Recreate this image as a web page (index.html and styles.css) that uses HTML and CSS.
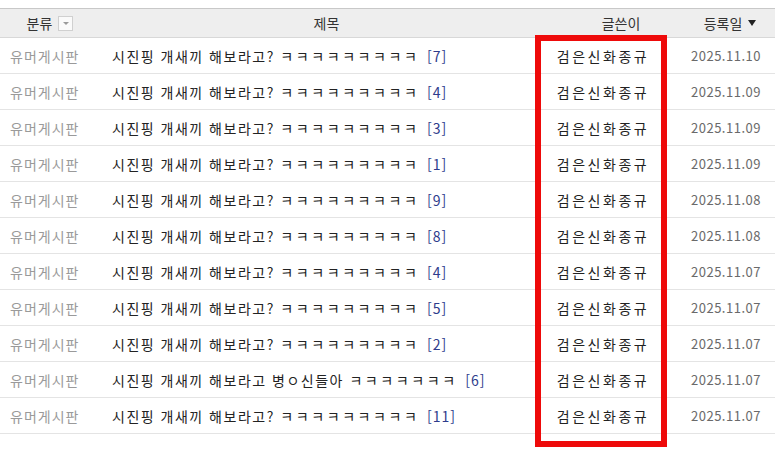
FILE: index.html
```html
<!DOCTYPE html>
<html lang="ko">
<head>
<meta charset="utf-8">
<title>게시판</title>
<link rel="stylesheet" href="styles.css">
</head>
<body>
<div class="page">
  <div class="topline"></div>
  <div class="board">
    <div class="row head">
      <div class="c-cat">분류 <span class="ddbox"><span class="ddtri"></span></span></div>
      <div class="c-title-h">제목</div>
      <div class="c-author-h">글쓴이</div>
      <div class="c-date-h">등록일 <span class="sorttri"></span></div>
    </div>
    <div class="row"><div class="c-cat gray">유머게시판</div><div class="c-title">시진핑 개새끼 해보라고? <span class="kk">ㅋㅋㅋㅋㅋㅋㅋㅋㅋ</span> <span class="cmt">[7]</span></div><div class="c-author">검은신화종규</div><div class="c-date">2025.11.10</div></div>
    <div class="row"><div class="c-cat gray">유머게시판</div><div class="c-title">시진핑 개새끼 해보라고? <span class="kk">ㅋㅋㅋㅋㅋㅋㅋㅋㅋ</span> <span class="cmt">[4]</span></div><div class="c-author">검은신화종규</div><div class="c-date">2025.11.09</div></div>
    <div class="row"><div class="c-cat gray">유머게시판</div><div class="c-title">시진핑 개새끼 해보라고? <span class="kk">ㅋㅋㅋㅋㅋㅋㅋㅋㅋ</span> <span class="cmt">[3]</span></div><div class="c-author">검은신화종규</div><div class="c-date">2025.11.09</div></div>
    <div class="row"><div class="c-cat gray">유머게시판</div><div class="c-title">시진핑 개새끼 해보라고? <span class="kk">ㅋㅋㅋㅋㅋㅋㅋㅋㅋ</span> <span class="cmt">[1]</span></div><div class="c-author">검은신화종규</div><div class="c-date">2025.11.09</div></div>
    <div class="row"><div class="c-cat gray">유머게시판</div><div class="c-title">시진핑 개새끼 해보라고? <span class="kk">ㅋㅋㅋㅋㅋㅋㅋㅋㅋ</span> <span class="cmt">[9]</span></div><div class="c-author">검은신화종규</div><div class="c-date">2025.11.08</div></div>
    <div class="row"><div class="c-cat gray">유머게시판</div><div class="c-title">시진핑 개새끼 해보라고? <span class="kk">ㅋㅋㅋㅋㅋㅋㅋㅋㅋ</span> <span class="cmt">[8]</span></div><div class="c-author">검은신화종규</div><div class="c-date">2025.11.08</div></div>
    <div class="row"><div class="c-cat gray">유머게시판</div><div class="c-title">시진핑 개새끼 해보라고? <span class="kk">ㅋㅋㅋㅋㅋㅋㅋㅋㅋ</span> <span class="cmt">[4]</span></div><div class="c-author">검은신화종규</div><div class="c-date">2025.11.07</div></div>
    <div class="row"><div class="c-cat gray">유머게시판</div><div class="c-title">시진핑 개새끼 해보라고? <span class="kk">ㅋㅋㅋㅋㅋㅋㅋㅋㅋ</span> <span class="cmt">[5]</span></div><div class="c-author">검은신화종규</div><div class="c-date">2025.11.07</div></div>
    <div class="row"><div class="c-cat gray">유머게시판</div><div class="c-title">시진핑 개새끼 해보라고? <span class="kk">ㅋㅋㅋㅋㅋㅋㅋㅋㅋ</span> <span class="cmt">[2]</span></div><div class="c-author">검은신화종규</div><div class="c-date">2025.11.07</div></div>
    <div class="row"><div class="c-cat gray">유머게시판</div><div class="c-title">시진핑 개새끼 해보라고 병ㅇ신들아 <span class="kk">ㅋㅋㅋㅋㅋㅋㅋ</span> <span class="cmt">[6]</span></div><div class="c-author">검은신화종규</div><div class="c-date">2025.11.07</div></div>
    <div class="row"><div class="c-cat gray">유머게시판</div><div class="c-title">시진핑 개새끼 해보라고? <span class="kk">ㅋㅋㅋㅋㅋㅋㅋㅋㅋ</span> <span class="cmt">[11]</span></div><div class="c-author">검은신화종규</div><div class="c-date">2025.11.07</div></div>
  </div>
  <div class="highlight"></div>
</div>
</body>
</html>
```

FILE: styles.css
```css
html, body {
  margin: 0;
  padding: 0;
  background: #fff;
}
body {
  font-family: "Noto Sans CJK KR", "Noto Sans", sans-serif;
  font-size: 14px;
  color: #222;
}
.page {
  position: relative;
  width: 775px;
  height: 452px;
  overflow: hidden;
}
.topline {
  height: 8px;
  border-bottom: 1px solid #c8c8c8;
}
.board {
  display: flex;
  flex-direction: column;
}
.row {
  display: grid;
  grid-template-columns: 90px 445px 132px 108px;
  height: 35px;
  border-bottom: 1px solid #e4e4e4;
  align-items: center;
  line-height: 1;
}
.row.head {
  height: 28px;
  background: #eeeeee;
  border-bottom: 1px solid #d8d8d8;
  color: #333;
}
.c-cat {
  display: flex;
  align-items: center;
  justify-content: center;
  gap: 6px;
  padding-left: 10px;
}
.row .c-cat.gray {
  justify-content: flex-start;
  padding-left: 10px;
  color: #9a9a9a;
  letter-spacing: 1px;
}
.ddbox {
  width: 13px;
  height: 13px;
  border: 1px solid #d0d0d0;
  background: #fafafa;
  display: flex;
  align-items: center;
  justify-content: center;
}
.ddtri {
  width: 0;
  height: 0;
  border-left: 3px solid transparent;
  border-right: 3px solid transparent;
  border-top: 3px solid #9a9a9a;
}
.c-title-h {
  text-align: center;
  padding-left: 28px;
}
.c-title {
  padding-left: 22px;
  letter-spacing: 1.5px;
  white-space: nowrap;
}
.kk {
  letter-spacing: 2.6px;
}
.cmt {
  color: #2e3c8c;
  letter-spacing: 1px;
  margin-left: 2px;
}
.c-author-h {
  text-align: center;
  padding-left: 40px;
}
.c-author {
  text-align: center;
  letter-spacing: 2.5px;
  padding-left: 4px;
}
.c-date-h {
  display: flex;
  align-items: center;
  justify-content: center;
  gap: 6px;
  padding-left: 18px;
}
.sorttri {
  width: 0;
  height: 0;
  border-left: 4px solid transparent;
  border-right: 4px solid transparent;
  border-top: 6px solid #222;
}
.c-date {
  text-align: center;
  color: #6a6a6a;
  font-size: 13px;
  letter-spacing: 0.5px;
  padding-left: 10px;
}
.highlight {
  position: absolute;
  left: 535px;
  top: 35px;
  width: 120px;
  height: 400px;
  border: 6px solid #ee0a0a;
}
```
